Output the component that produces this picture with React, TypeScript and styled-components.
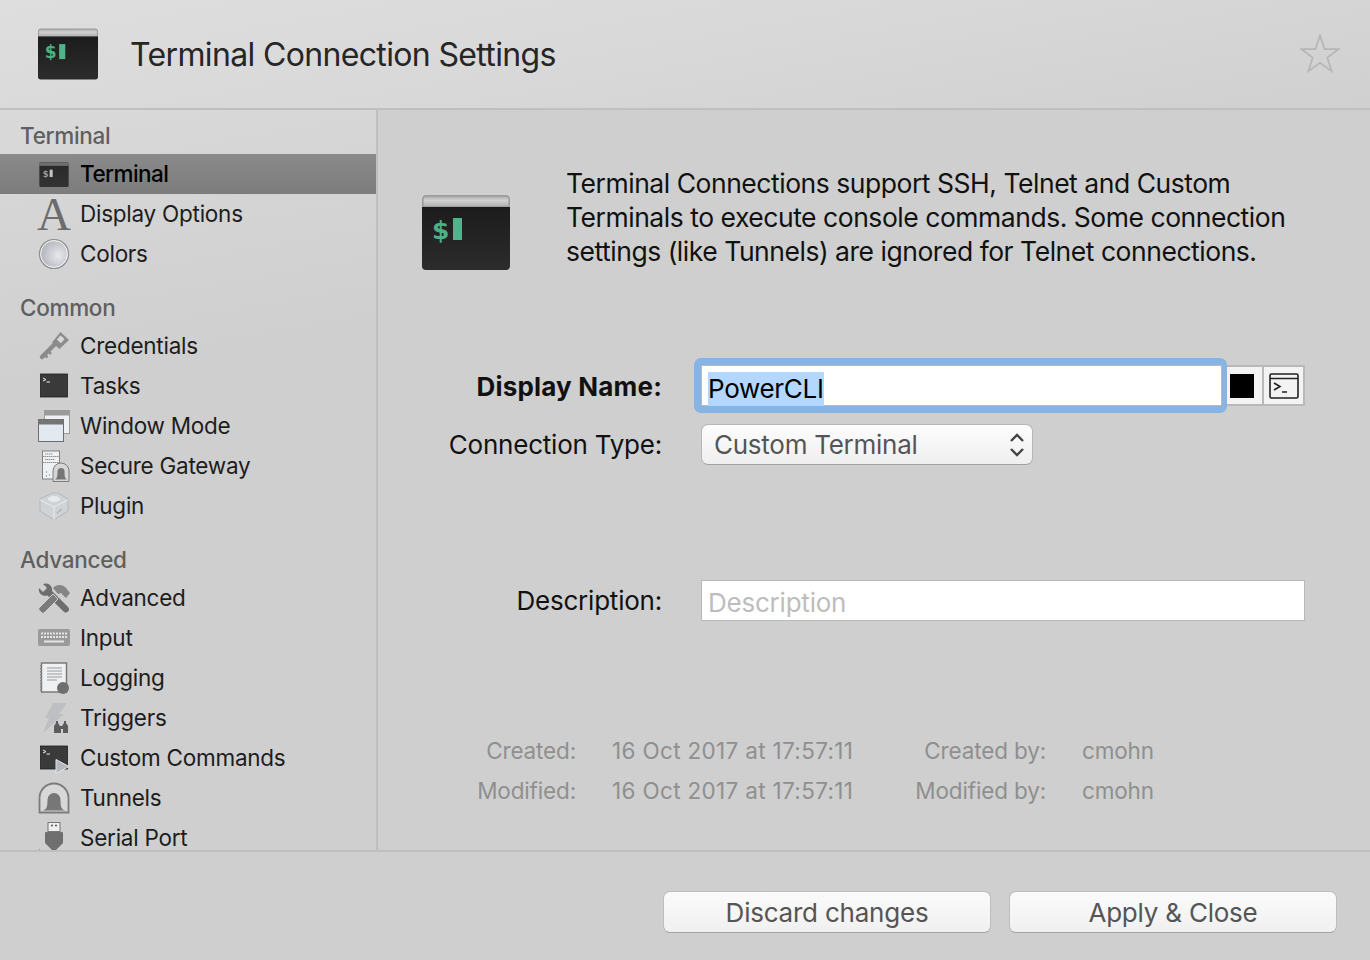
import React from "react";
import styled, { createGlobalStyle } from "styled-components";

const Global = createGlobalStyle`
  html, body { margin: 0; padding: 0; background: #cfcfcf; }
  * { box-sizing: border-box; }
`;
const FONT = `Inter, "Liberation Sans", sans-serif`;

const Page = styled.div`
  width: 1370px; height: 960px; display: flex; flex-direction: column; overflow: hidden;
  font-family: ${FONT}; background: #cfcfcf; color: #1b1b1b;
`;
const Header = styled.header`
  height: 110px; flex: none; display: flex; align-items: center; padding: 0 30px 0 38px;
  background: linear-gradient(170deg, #dedede 0%, #d8d8d8 50%, #d0d0d0 100%);
  border-bottom: 2px solid #bfbfbf;
`;
const Title = styled.h1`
  margin: 0 0 0 32px; flex: 1; font-size: 32px; font-weight: 400; color: #262626; letter-spacing: -0.65px;
`;
const Body = styled.div`flex: 1; display: flex; min-height: 0;`;
const Sidebar = styled.nav`
  width: 378px; flex: none; padding-top: 8px; overflow: hidden;
  border-right: 2px solid #bfbfbf;
  background: linear-gradient(170deg, #d9d9d9 0%, #cfcfcf 35%);
`;
const Section = styled.div`& + & { margin-top: 16px; }`;
const SectionLabel = styled.div`
  height: 36px; display: flex; align-items: center; padding: 0 0 1px 20px;
  font-size: 22.5px; font-weight: 500; color: #5f5f5f; letter-spacing: -0.3px;
`;
const Row = styled.div<{ $selected?: boolean }>`
  height: 40px; display: flex; align-items: center; padding-left: 38px; gap: 10px;
  font-size: 22.5px;
  letter-spacing: ${(p) => (p.$selected ? "-0.55px" : "-0.25px")};
  color: ${(p) => (p.$selected ? "#000" : "#1d1d1d")};
  font-weight: ${(p) => (p.$selected ? 500 : 400)};
  background: ${(p) => (p.$selected ? "linear-gradient(#8a8a8a, #7c7c7c)" : "transparent")};
`;
const RowText = styled.span`margin-top: -1px;`;
const IconBox = styled.span`width: 32px; height: 32px; flex: none; display: flex; align-items: center; justify-content: center;`;
const Main = styled.main`flex: 1; padding: 56px 65px 0 44px; min-width: 0; overflow: hidden;`;
const Info = styled.div`display: flex; gap: 56px; align-items: flex-start;`;
const InfoIcon = styled.div`margin-top: 29px; flex: none; width: 88px; height: 75px;`;
const InfoText = styled.p`margin: 0; font-size: 26.5px; line-height: 34px; color: #111; letter-spacing: -0.47px;`;
const Form = styled.div`
  margin: 95px 0 0 -44px; display: grid; grid-template-columns: 284px 1fr; column-gap: 39px; row-gap: 18px; align-items: center;
`;
const Label = styled.label<{ $strong?: boolean; $gapTop?: number }>`
  text-align: right; font-size: 26px; color: #111;
  letter-spacing: ${(p) => (p.$strong ? "0.18px" : "-0.22px")};
  font-weight: ${(p) => (p.$strong ? 700 : 400)};
  margin-top: ${(p) => p.$gapTop ?? 0}px;
`;
const NameGroup = styled.div`display: flex; height: 41px;`;
const NameInput = styled.div`
  position: relative; z-index: 1; width: 521px; height: 41px; background: #fff; border: 1px solid #b9b9b9;
  padding-left: 6px; display: flex; align-items: center;
  &::after {
    content: ""; position: absolute; top: -8px; bottom: -8px; left: -8px; right: -6px;
    border: 7px solid #86b4e5; border-right-width: 5px; border-radius: 7px; pointer-events: none;
  }
`;
const Selected = styled.span`
  background: #b3d7ff; color: #000; font-size: 26px; letter-spacing: -0.3px; line-height: 34px; margin-top: 6px;
`;
const SideButton = styled.div`
  width: 42px; height: 41px; background: #f3f3f3; border: 2px solid #b9b9b9; border-left-width: 1px;
  display: flex; align-items: center; justify-content: center;
`;
const ColorButton = styled(SideButton)`
  width: 41px; border-left: none; border-right-width: 1px; padding-left: 0;
`;
const Swatch = styled.span`width: 24px; height: 24px; background: #000; display: block;`;
const SelectBox = styled.div`
  width: 332px; height: 41px; border: 1px solid #b7b7b7; border-bottom-color: #a2a2a2; border-radius: 7px;
  background: linear-gradient(#fdfdfd, #efefef);
  display: flex; align-items: center; justify-content: space-between; padding: 0 6px 0 12px;
  font-size: 26px; color: #555; letter-spacing: -0.26px;
`;
const TextInput = styled.div<{ $gapTop?: number }>`
  height: 41px; background: #fff; border: 1px solid #b9b9b9; padding: 3px 0 0 6px; display: flex; align-items: center;
  font-size: 26px; color: #bdbdbd; letter-spacing: -0.22px;
  margin-top: ${(p) => p.$gapTop ?? 0}px;
`;
const Meta = styled.div`
  margin: 109px 0 0 -44px; display: grid; grid-template-columns: 198px 252px 146px auto; column-gap: 36px; grid-auto-rows: 40px; align-items: center;
  font-size: 22.5px; color: #8f8f8f; letter-spacing: -0.15px;
`;
const MetaKey = styled.span`text-align: right;`;
const MetaStamp = styled.span`white-space: nowrap; letter-spacing: 0.33px;`;
const Footer = styled.footer`
  height: 110px; flex: none; border-top: 2px solid #bfbfbf; display: flex; justify-content: flex-end; gap: 18px; padding: 39px 33px 0 0;
`;
const FootButton = styled.button`
  width: 328px; height: 42px; border: 1px solid #bdbdbd; border-bottom-color: #a4a4a4; border-radius: 7px;
  background: linear-gradient(#fbfbfb, #f0f0f0); font-family: ${FONT}; font-size: 26px; color: #555; letter-spacing: -0.22px; padding: 0;
`;

const TerminalLogo = ({ w, h, muted }: { w: number; h: number; muted?: boolean }) => (
  <svg width={w} height={h} viewBox="0 0 88 75">
    <defs>
      <linearGradient id={muted ? "tbm" : "tb"} x1="0" x2="0" y1="0" y2="1">
        <stop offset="0" stopColor={muted ? "#5c5c5c" : "#a6a6a6"} /><stop offset="0.4" stopColor={muted ? "#717171" : "#d2d2d2"} /><stop offset="1" stopColor={muted ? "#6a6a6a" : "#adadad"} />
      </linearGradient>
      <linearGradient id={muted ? "tdm" : "td"} x1="0" x2="0" y1="0" y2="1">
        <stop offset="0" stopColor={muted ? "#2a2a2a" : "#1c1c1c"} /><stop offset="1" stopColor={muted ? "#333" : "#2c2c2c"} />
      </linearGradient>
    </defs>
    <path d="M4 0.800H84a3.200 3.200 0 0 1 3.200 3.200V12H0.800V4A3.200 3.200 0 0 1 4 0.800Z" fill={`url(#${muted ? "tbm" : "tb"})`} stroke={muted ? "#555" : "#9c9c9c"} strokeWidth="1.600" />
    <path d="M0 12H88V71a4 4 0 0 1-4 4H4a4 4 0 0 1-4-4Z" fill={`url(#${muted ? "tdm" : "td"})`} />
    <text x="10" y="44" fontFamily="'DejaVu Sans', sans-serif" fontWeight="700" fontSize="25" fill={muted ? "#9a9a9a" : "#4fae86"}>$</text>
    <rect x="31" y="23" width="9" height="22" fill={muted ? "#c4c4c4" : "#50b38b"} />
  </svg>
);

const Prompt = ({ play }: { play?: boolean }) => (
  <svg width="32" height="32" viewBox="0 0 32 32">
    <rect x="2.500" y="4" width="27" height="23" fill="#3a3a3a" stroke="#1f1f1f" strokeWidth="0.800" />
    <path d="M5 8l3 1.600L5 11M8.500 12H12" stroke="#eee" strokeWidth="1" fill="none" />
    {play && <path d="M18 17.500L31 24.500 18 31.500Z" fill="#b4b9bd" stroke="#e2e6ea" strokeWidth="1" />}
  </svg>
);
const Glyph = ({ children }: { children: React.ReactNode }) => (
  <svg width="32" height="32" viewBox="0 0 32 32">{children}</svg>
);
const Arch = styled.span`
  font-family: "Liberation Serif", serif; font-size: 47px; line-height: 32px; color: #6c6c6c; letter-spacing: 0; font-weight: 400; margin-top: 0;
`;
const icons: Record<string, React.ReactNode> = {
  terminal: <TerminalLogo w={30} h={25} muted />,
  display: <Arch>A</Arch>,
  colors: (
    <svg width="32" height="32" viewBox="0 0 32 32">
      <defs><radialGradient id="cg" cx="0.65" cy="0.55" r="0.7"><stop offset="0" stopColor="#e8e9ec" /><stop offset="1" stopColor="#a9acb5" /></radialGradient></defs>
      <circle cx="16" cy="16" r="14.500" fill="url(#cg)" stroke="#8e8e8e" strokeWidth="1.200" />
      <circle cx="16" cy="16" r="13.400" fill="none" stroke="#f5f5f5" strokeWidth="1" />
    </svg>
  ),
  credentials: (
    <Glyph>
      <path d="M4 27L17 14" stroke="#8b8b8b" strokeWidth="4.500" strokeLinecap="round" />
      <path d="M6.500 24.500l3 3M10 21l3 3" stroke="#8b8b8b" strokeWidth="2.600" />
      <path d="M14 12.500L22.500 2 31 10l-9.500 9Z" fill="#8c8c8c" />
      <rect x="20" y="6.500" width="5.500" height="5.500" transform="rotate(42 22.700 9.200)" fill="#d8d8d8" />
    </Glyph>
  ),
  tasks: <Prompt />,
  window: (
    <Glyph>
      <rect x="6.500" y="0.500" width="25" height="23" fill="#eef0f3" stroke="#9a9a9a" />
      <rect x="6.500" y="0.500" width="25" height="5" fill="#9a9a9a" />
      <rect x="0.500" y="9.500" width="25" height="22" fill="#e3e9f0" stroke="#6e6e6e" />
      <rect x="0.500" y="9.500" width="25" height="5" fill="#757575" />
    </Glyph>
  ),
  gateway: (
    <Glyph>
      <rect x="4.500" y="1" width="17" height="28" fill="#eef0f2" stroke="#808080" />
      <path d="M4.500 6.500h17M4.500 12.500h17M7 4h8M7 9.500h10" stroke="#8a8a8a" strokeWidth="1" strokeDasharray="1.400 .6" />
      <path d="M8 22h1M11 25h1M8 26h1" stroke="#666" strokeWidth="1" />
      <path d="M15 31.500V21a8 8 0 0 1 16 0v10.500Z" fill="#d6d6d6" stroke="#7d7d7d" />
      <path d="M17 29.500c2-1 2.500-3 2.500-8a3.500 3.500 0 0 1 7 0c0 5 .5 7 2.500 8Z" fill="#767676" />
    </Glyph>
  ),
  plugin: (
    <Glyph>
      <path d="M2 9L14 3h6l10 6v12l-14 9-14-9Z" fill="#d0d3d6" stroke="#b4b7ba" />
      <path d="M2 10l14 7 14-7M16 17v13" stroke="#e8eaec" strokeWidth="1" fill="none" />
      <ellipse cx="16" cy="9" rx="6" ry="3" fill="#e7e9ea" />
      <path d="M19 23c2-1 3-3 5-4" stroke="#8e9194" strokeWidth="1.300" strokeDasharray="1 1" fill="none" />
    </Glyph>
  ),
  advanced: (
    <Glyph>
      <path d="M1 6l4 4 4-4-4-4c5-2 10 2 9 7L30 25a2.800 2.800 0 0 1-4.500 4.500L9.500 13.500C4 15 0 11 1 6Z" fill="#6e6e6e" />
      <path d="M1 26L15 12l5 5L6 31a1.500 1.500 0 0 1-2 0L1 28a1.500 1.500 0 0 1 0-2Z" fill="#7b7b7b" stroke="#cfcfcf" strokeWidth="1" />
      <path d="M15 6c3-4 10-4 13 0l4 5-4 5-5-5-3 1-5-6Z" fill="#858585" />
    </Glyph>
  ),
  input: (
    <svg width="32" height="18" viewBox="0 0 32 18">
      <rect width="32" height="17" rx="2" fill="#9a9a9a" />
      <path d="M3 4.500h26M3 8h26" stroke="#e4e4e4" strokeWidth="2" strokeDasharray="2 1" />
      <path d="M6 12.500h20" stroke="#e4e4e4" strokeWidth="2" />
    </svg>
  ),
  logging: (
    <Glyph>
      <rect x="3.500" y="1" width="25" height="29" fill="#eef0f2" stroke="#747474" strokeWidth="1.400" />
      <path d="M3 3v26" stroke="#8a8a8a" strokeWidth="2" strokeDasharray="1.500 1.500" />
      <path d="M9 6h15M9 9h15M9 12h15M9 15h15M9 18h10" stroke="#9a9a9a" strokeWidth="1" />
      <circle cx="25" cy="26" r="6" fill="#6e6e6e" />
    </Glyph>
  ),
  triggers: (
    <Glyph>
      <path d="M15 1h14l-8 11h5L5 31l6-15H7Z" fill="#bdbfc2" />
      <path d="M16 31V24l2-3v-2h2v2l2 3h2l2-3v-2h2v2l2 3v7h-5v-4h-2v4Z" fill="#5c5c5c" />
    </Glyph>
  ),
  commands: <Prompt play />,
  tunnels: (
    <Glyph>
      <path d="M1.500 30.500V16a14.500 14.500 0 0 1 29 0v14.500Z" fill="#d8d8d8" stroke="#7c7c7c" strokeWidth="1.800" />
      <path d="M4.500 28.500c4-1 5-3 5-11a6.500 6.500 0 0 1 13 0c0 8 1 10 5 11Z" fill="#777" />
    </Glyph>
  ),
  serial: (
    <Glyph>
      <rect x="10" y="0.500" width="12" height="9" fill="#eee" stroke="#777" />
      <path d="M13 3.500h2M17 3.500h2" stroke="#555" strokeWidth="1.500" />
      <path d="M8 10h16a1 1 0 0 1 1 1v10l-7 7v4h-4v-4l-7-7V11a1 1 0 0 1 1-1Z" fill="#6f6f6f" />
      <path d="M1 28c2 1 4 2 6 4" stroke="#6f6f6f" strokeWidth="1.500" fill="none" />
    </Glyph>
  ),
};

const groups: { title: string; items: [string, string][] }[] = [
  { title: "Terminal", items: [["Terminal", "terminal"], ["Display Options", "display"], ["Colors", "colors"]] },
  { title: "Common", items: [["Credentials", "credentials"], ["Tasks", "tasks"], ["Window Mode", "window"], ["Secure Gateway", "gateway"], ["Plugin", "plugin"]] },
  { title: "Advanced", items: [["Advanced", "advanced"], ["Input", "input"], ["Logging", "logging"], ["Triggers", "triggers"], ["Custom Commands", "commands"], ["Tunnels", "tunnels"], ["Serial Port", "serial"]] },
];

export default function App() {
  return (
    <Page>
      <Global />
      <Header>
        <TerminalLogo w={60} h={52} />
        <Title>Terminal Connection Settings</Title>
        <svg width="40" height="40" viewBox="0 0 42 42">
          <path d="M21 1.500l4.800 14.300h15L28.700 24.800l4.500 14.200L21 30.300 8.800 39l4.500-14.200L1.200 15.800h15Z" fill="none" stroke="#b6b6b6" strokeWidth="1.800" />
        </svg>
      </Header>
      <Body>
        <Sidebar>
          {groups.map((g) => (
            <Section key={g.title}>
              <SectionLabel>{g.title}</SectionLabel>
              {g.items.map(([label, icon], i) => (
                <Row key={label} $selected={g.title === "Terminal" && i === 0}>
                  <IconBox>{icons[icon]}</IconBox>
                  <RowText>{label}</RowText>
                </Row>
              ))}
            </Section>
          ))}
        </Sidebar>
        <Main>
          <Info>
            <InfoIcon><TerminalLogo w={88} h={75} /></InfoIcon>
            <InfoText>
              Terminal Connections support SSH, Telnet and Custom<br />
              Terminals to execute console commands. Some connection<br />
              settings (like Tunnels) are ignored for Telnet connections.
            </InfoText>
          </Info>
          <Form>
            <Label $strong $gapTop={2}>Display Name:</Label>
            <NameGroup>
              <NameInput><Selected>PowerCLI</Selected></NameInput>
              <ColorButton><Swatch /></ColorButton>
              <SideButton>
                <svg width="30" height="26" viewBox="0 0 30 26">
                  <rect x="1" y="1" width="28" height="24" rx="1.500" fill="none" stroke="#222" strokeWidth="1.600" />
                  <path d="M1 5.500h28" stroke="#222" strokeWidth="1.500" />
                  <path d="M5 10l6 3.500L5 17M13 19h5" fill="none" stroke="#222" strokeWidth="1.600" />
                </svg>
              </SideButton>
            </NameGroup>
            <Label>Connection Type:</Label>
            <SelectBox>
              Custom Terminal
              <svg width="18" height="28" viewBox="0 0 18 28">
                <path d="M3 10l6-6 6 6M3 18l6 6 6-6" fill="none" stroke="#444" strokeWidth="2.400" />
              </svg>
            </SelectBox>
            <Label $gapTop={97}>Description:</Label>
            <TextInput $gapTop={97}>Description</TextInput>
          </Form>
          <Meta>
            <MetaKey>Created:</MetaKey><MetaStamp>16 Oct 2017 at 17:57:11</MetaStamp>
            <MetaKey>Created by:</MetaKey><span>cmohn</span>
            <MetaKey>Modified:</MetaKey><MetaStamp>16 Oct 2017 at 17:57:11</MetaStamp>
            <MetaKey>Modified by:</MetaKey><span>cmohn</span>
          </Meta>
        </Main>
      </Body>
      <Footer>
        <FootButton>Discard changes</FootButton>
        <FootButton>Apply &amp; Close</FootButton>
      </Footer>
    </Page>
  );
}
